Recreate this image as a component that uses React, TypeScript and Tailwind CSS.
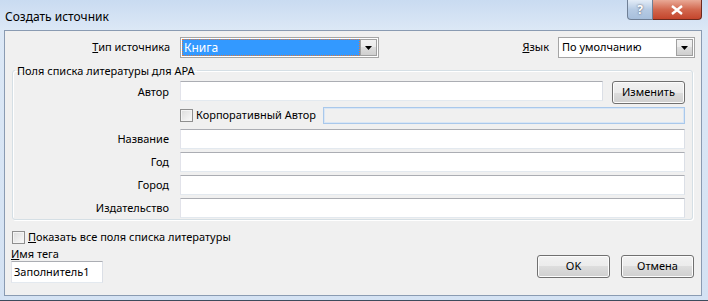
const font = "font-['Segoe_UI','Noto_Sans',sans-serif]";

const btn =
  'h-[23px] rounded-[3px] border border-[#707070] bg-[linear-gradient(#f2f2f2_0%,#ebebeb_50%,#dddddd_50%,#cfcfcf_100%)] text-[11px] text-black shadow-[inset_0_0_0_1px_#fcfcfc]';

function TextBox({ className = '', value = '' }: { className?: string; value?: string }) {
  return (
    <div
      className={`flex items-center border border-[#abadb3] border-b-[#e3e9ef] border-l-[#e2e3ea] border-r-[#dbdfe6] bg-white px-[2px] ${className}`}
    >
      {value}
    </div>
  );
}

function CheckBox() {
  return (
    <span className="inline-block h-[13px] w-[13px] shrink-0 border border-[#8f8f8f] bg-[linear-gradient(135deg,#dcdcdc,#fafafa)] shadow-[inset_0_0_0_1px_#f4f4f4]" />
  );
}

function DropArrow() {
  return (
    <span className="flex h-full w-[17px] items-center justify-center border border-[#a0a0a0] bg-[linear-gradient(#f2f2f2_0%,#ebebeb_50%,#dddddd_50%,#cfcfcf_100%)]">
      <svg width="7" height="4" viewBox="0 0 7 4">
        <path d="M0 0h7L3.5 4z" fill="#000" />
      </svg>
    </span>
  );
}

export default function App() {
  return (
    <div className={`${font} flex h-[301px] w-[708px] flex-col whitespace-nowrap bg-[linear-gradient(#c9dbf1,#dce8f6_30px,#d4e2f3)] text-[11px] text-black`}>
      {/* title bar */}
      <div className="relative h-[30px] shrink-0">
        <span className="absolute left-[5px] top-[9px] text-[12px] leading-[15px]">Создать источник</span>
        <div className="absolute right-[6px] top-0 flex">
          <div className="flex h-[20px] w-[26px] items-center justify-center rounded-bl-[4px] border border-t-0 border-[#6f7f95] bg-[linear-gradient(#e3ecf7,#b6cbe4_50%,#a7bfdc)] text-[12px] font-bold text-white [text-shadow:0_0_2px_#445]">
            ?
          </div>
          <div className="flex h-[20px] w-[49px] items-center justify-center rounded-br-[4px] border border-l-0 border-t-0 border-[#6d2a1e] bg-[linear-gradient(#e9a996,#d2684f_50%,#c4452c)]">
            <svg width="12" height="10" viewBox="0 0 12 10">
              <path d="M1 1l10 8M11 1L1 9" stroke="#fff" strokeWidth="2.4" />
            </svg>
          </div>
        </div>
      </div>

      {/* client area */}
      <div className="ml-[4px] mr-[6px] flex h-[266px] flex-col border border-[#8a9bb2] bg-[#f0f0f0]">
        {/* source type / language */}
        <div className="mt-[6px] flex h-[21px] items-center">
          <span className="w-[165px] text-right">
            <u>Т</u>ип источника
          </span>
          <div className="ml-[10px] flex h-[21px] w-[199px] items-center border border-[#a5a5a5] bg-white p-[1px]">
            <span className="flex h-full flex-1 items-center bg-[#3399ff] px-[2px] text-[12px] text-white outline outline-1 outline-dotted outline-[#e07a3c] -outline-offset-1">
              Книга
            </span>
            <DropArrow />
          </div>
          <span className="ml-auto">
            <u>Я</u>зык
          </span>
          <div className="ml-[9px] mr-[6px] flex h-[21px] w-[137px] items-center border border-[#a5a5a5] bg-white p-[1px]">
            <span className="flex-1 px-[2px]">По умолчанию</span>
            <DropArrow />
          </div>
        </div>

        {/* APA fields group */}
        <fieldset className="ml-[7px] mr-[8px] mt-[5px] rounded-[3px] border border-[#d5dfe5] pb-[1px] pr-[7px] shadow-[inset_1px_1px_0_#fff,1px_1px_0_#fff]">
          <legend className="ml-[2px] px-[2px] leading-[15px]">Поля списка литературы для APA</legend>
          <div className="grid grid-cols-[156px_1fr] gap-x-[11px] pt-[3px]">
            <span className="self-center text-right">Автор</span>
            <div className="flex">
              <TextBox className="h-[20px] flex-1" />
              <button className={`${btn} ml-[9px] h-[20px] w-[73px]`}>Изменить</button>
            </div>

            <span />
            <div className="mt-[3px] flex h-[17px] items-center">
              <CheckBox />
              <span className="ml-[3px]">Корпоративный Автор</span>
              <div className="ml-auto h-[17px] w-[362px] border border-[#a9c8eb] bg-[#f0f0f0] shadow-[inset_0_0_0_1px_#d9e6f5]" />
            </div>

            <span className="mt-[5px] self-center text-right">Название</span>
            <TextBox className="mt-[5px] h-[20px]" />
            <span className="mt-[3px] self-center text-right">Год</span>
            <TextBox className="mt-[3px] h-[20px]" />
            <span className="mt-[3px] self-center text-right">Город</span>
            <TextBox className="mt-[3px] h-[20px]" />
            <span className="mt-[3px] self-center text-right">Издательство</span>
            <TextBox className="mt-[3px] h-[20px]" />
          </div>
        </fieldset>

        {/* bottom area */}
        <div className="ml-[7px] mt-[10px] flex h-[15px] items-center">
          <CheckBox />
          <span className="ml-[3px]">
            <u>П</u>оказать все поля списка литературы
          </span>
        </div>
        <div className="mt-[2px] flex items-start">
          <div className="ml-[6px] flex flex-col">
            <span className="leading-[14px]">
              <u>И</u>мя тега
            </span>
            <TextBox className="h-[22px] w-[92px]" value="Заполнитель1" />
          </div>
          <div className="ml-auto mr-[7px] mt-[8px] flex gap-[11px]">
            <button className={`${btn} w-[73px] border-[#3c7fb1] shadow-[inset_0_0_0_1px_#aee0f8]`}>OK</button>
            <button className={`${btn} w-[73px]`}>Отмена</button>
          </div>
        </div>
      </div>
      <div className="mt-auto h-[1px] bg-[#3d4b5c]" />
    </div>
  );
}
